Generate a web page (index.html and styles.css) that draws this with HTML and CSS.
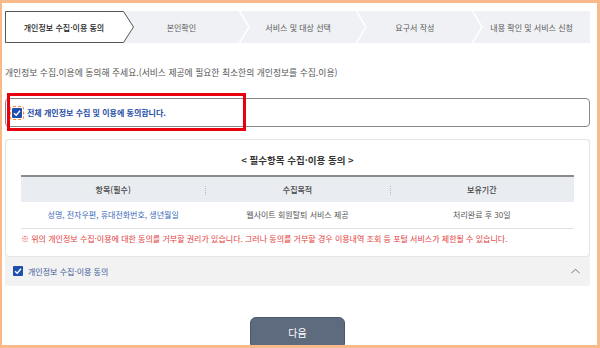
FILE: index.html
```html
<!DOCTYPE html>
<html lang="ko">
<head>
    <meta charset="UTF-8">
    <meta name="viewport" content="width=device-width, initial-scale=1.0">
    <title>개인정보 수집·이용 동의</title>
    <link rel="stylesheet" href="styles.css">
</head>
<body>
    <div class="frame">
        <ol class="steps">
            <li class="step active">
                <svg class="step-shape" viewBox="0 0 129 32" preserveAspectRatio="none">
                    <polygon points="0.5,0.5 118.5,0.5 128.5,16 118.5,31.5 0.5,31.5" fill="#fff" stroke="#555"/>
                </svg>
                <span>개인정보 수집·이용 동의</span>
            </li>
            <li class="step">
                <span>본인확인</span>
                <svg class="chevron" viewBox="0 0 11 32"><polyline points="0.5,0 10,16 0.5,32" fill="none" stroke="#fff" stroke-width="1.5"/></svg>
            </li>
            <li class="step">
                <span>서비스 및 대상 선택</span>
                <svg class="chevron" viewBox="0 0 11 32"><polyline points="0.5,0 10,16 0.5,32" fill="none" stroke="#fff" stroke-width="1.5"/></svg>
            </li>
            <li class="step">
                <span>요구서 작성</span>
                <svg class="chevron" viewBox="0 0 11 32"><polyline points="0.5,0 10,16 0.5,32" fill="none" stroke="#fff" stroke-width="1.5"/></svg>
            </li>
            <li class="step">
                <span>내용 확인 및 서비스 신청</span>
            </li>
        </ol>

        <p class="guide">개인정보 수집.이용에 동의해 주세요.(서비스 제공에 필요한 최소한의 개인정보를 수집.이용)</p>

        <div class="agree-all">
            <label class="check focus">
                <span class="box"><svg viewBox="0 0 10 10"><polyline points="2,5.2 4.2,7.3 8,2.8" fill="none" stroke="#fff" stroke-width="1.4"/></svg></span>
                <strong>전체 개인정보 수집 및 이용에 동의합니다.</strong>
            </label>
            <div class="highlight"></div>
        </div>

        <div class="terms">
            <div class="terms-card">
                <h2>&lt; 필수항목 수집·이용 동의 &gt;</h2>
                <table>
                    <thead>
                        <tr>
                            <th>항목(필수)</th>
                            <th>수집목적</th>
                            <th>보유기간</th>
                        </tr>
                    </thead>
                    <tbody>
                        <tr>
                            <td class="items">성명, 전자우편, 휴대전화번호, 생년월일</td>
                            <td>웹사이트 회원탈퇴 서비스 제공</td>
                            <td>처리완료 후 30일</td>
                        </tr>
                    </tbody>
                </table>
                <p class="warn">※ 위의 개인정보 수집·이용에 대한 동의를 거부할 권리가 있습니다. 그러나 동의를 거부할 경우 이용내역 조회 등 포털 서비스가 제한될 수 있습니다.</p>
            </div>
            <div class="terms-foot">
                <label class="check">
                    <span class="box"><svg viewBox="0 0 10 10"><polyline points="2,5.2 4.2,7.3 8,2.8" fill="none" stroke="#fff" stroke-width="1.4"/></svg></span>
                    <span>개인정보 수집·이용 동의</span>
                </label>
                <svg class="toggle" viewBox="0 0 10 6"><polyline points="0.5,5.5 5,1 9.5,5.5" fill="none" stroke="#666" stroke-width="1"/></svg>
            </div>
        </div>

        <div class="actions">
            <button type="button">다음</button>
        </div>
    </div>
</body>
</html>
```

FILE: styles.css
```css
* {
    box-sizing: border-box;
}
body {
    margin: 0;
    font-family: "Noto Sans CJK KR", "Noto Sans", sans-serif;
    color: #444;
    background: #fff;
}
.frame {
    width: 600px;
    height: 348px;
    border: 3px solid #f8b98b;
    border-left-width: 2px;
    padding: 8px 7px 0 3px;
    overflow: hidden;
}

/* steps */
.steps {
    display: flex;
    margin: 0;
    padding: 0;
    list-style: none;
    height: 32px;
    background: #eff1f4;
}
.step {
    position: relative;
    flex: 1;
    display: flex;
    align-items: center;
    justify-content: center;
    font-size: 8px;
    color: #5a5a5a;
}
.step span {
    position: relative;
    z-index: 2;
}
.step.active {
    flex: 0 0 118px;
    color: #222;
    font-weight: 500;
}
.step-shape {
    position: absolute;
    left: 0;
    top: 0;
    width: 129px;
    height: 32px;
    z-index: 1;
}
.chevron {
    position: absolute;
    right: -10px;
    top: 0;
    width: 11px;
    height: 32px;
    z-index: 1;
}

.guide {
    margin: 22px 0 17px;
    font-size: 8.8px;
    line-height: 16px;
    color: #555;
}

/* agree all */
.agree-all {
    position: relative;
    height: 29px;
    border: 1px solid #888;
    border-radius: 4px;
    padding-left: 6px;
    display: flex;
    align-items: center;
}
.highlight {
    position: absolute;
    left: 1px;
    top: -6px;
    width: 239px;
    height: 38px;
    border: 3px solid #e8000f;
}
.check {
    display: flex;
    align-items: center;
    gap: 5px;
    font-size: 8px;
    color: #3d5b9c;
}
.check strong {
    color: #1f4ea6;
    font-weight: 700;
}
.box {
    width: 10px;
    height: 10px;
    background: #1d4fae;
    border-radius: 1px;
    display: flex;
}
.box svg {
    width: 10px;
    height: 10px;
}
.focus .box {
    outline: 1px dashed #f08a3c;
    outline-offset: 1px;
}

/* terms */
.terms {
    margin-top: 12px;
    background: #f2f2f2;
    border-radius: 3px;
}
.terms-card {
    background: #fff;
    border: 1px solid #e4e4e4;
    border-radius: 4px;
    padding: 12px 15px 10px 15px;
}
.terms-card h2 {
    margin: 0 0 7px;
    text-align: center;
    font-size: 9.5px;
    line-height: 16px;
    font-weight: 700;
    color: #333;
}
table {
    width: 100%;
    border-collapse: collapse;
    table-layout: fixed;
    font-size: 8px;
}
th {
    position: relative;
    height: 26px;
    background: #e9ecf0;
    border-top: 2px solid #8c8c8c;
    font-weight: 500;
    color: #444;
}
th + th::before {
    content: "";
    position: absolute;
    left: 0;
    top: 9px;
    height: 9px;
    border-left: 1px dotted #bbb;
}
td {
    height: 26px;
    text-align: center;
    color: #555;
    border-bottom: 1px solid #e2e2e2;
}
td.items {
    color: #3c69b8;
}
.warn {
    margin: 3px 0 0;
    font-size: 8px;
    line-height: 14px;
    color: #e3403d;
}
.terms-foot {
    height: 29px;
    display: flex;
    align-items: center;
    justify-content: space-between;
    padding: 0 10px 0 8px;
}
.toggle {
    width: 9px;
    height: 6px;
}

.actions {
    display: flex;
    justify-content: center;
    margin-top: 31px;
}
button {
    width: 95px;
    height: 32px;
    border: 1px solid #4c586a;
    border-radius: 6px;
    background: #5e6a7e;
    color: #fff;
    font-family: inherit;
    font-size: 10px;
}
```
